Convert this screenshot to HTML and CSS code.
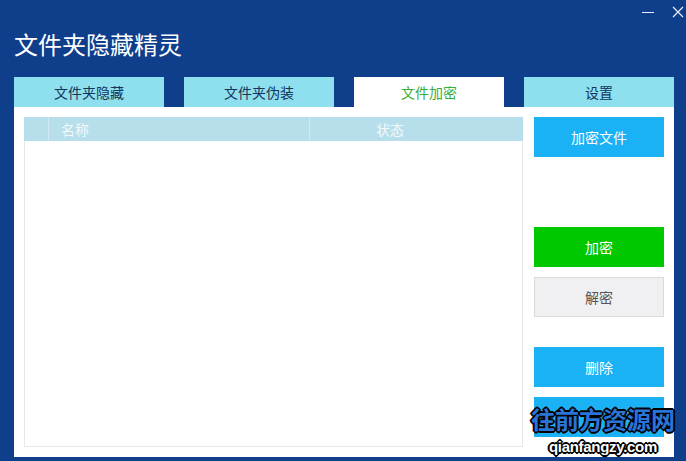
FILE: index.html
```html
<!DOCTYPE html>
<html lang="zh">
<head>
<meta charset="utf-8">
<title>文件夹隐藏精灵</title>
<link rel="stylesheet" href="styles.css">
</head>
<body>
<div class="window">
  <div class="titlebar">
    <div class="controls">
      <span class="ctl min"></span>
      <svg class="ctl close" width="12" height="12" viewBox="0 0 12 12"><path d="M1 1 L11 11 M11 1 L1 11" stroke="#e8f0ff" stroke-width="1.2" fill="none"/></svg>
    </div>
    <h1 class="title">文件夹隐藏精灵</h1>
  </div>
  <div class="tabs">
    <div class="tab">文件夹隐藏</div>
    <div class="tab">文件夹伪装</div>
    <div class="tab active">文件加密</div>
    <div class="tab">设置</div>
  </div>
  <div class="panel">
    <div class="table">
      <div class="thead">
        <div class="th th-check"></div>
        <div class="th th-name">名称</div>
        <div class="th th-status">状态</div>
      </div>
    </div>
    <div class="actions">
      <div class="btn blue">加密文件</div>
      <div class="btn green b-enc">加密</div>
      <div class="btn gray b-dec">解密</div>
      <div class="btn blue b-del">删除</div>
      <div class="btn blue b-last"></div>
    </div>
  </div>
  <div class="watermark">
    <div class="wm-cn">往前方资源网</div>
    <div class="wm-en">qianfangzy.com</div>
  </div>
</div>
</body>
</html>
```
FILE: styles.css
```css
* { box-sizing: border-box; }
html, body { margin: 0; padding: 0; }
body {
  background: #0f3e8b;
  font-family: "Noto Sans CJK SC", "Noto Sans", sans-serif;
  width: 686px;
  height: 461px;
  overflow: hidden;
}
.window {
  position: relative;
  width: 686px;
  height: 461px;
  padding: 0 12px 0 14px;
}
.titlebar {
  height: 77px;
  display: flex;
  flex-direction: column;
}
.controls {
  display: flex;
  justify-content: flex-end;
  align-items: center;
  gap: 18px;
  height: 24px;
  margin-right: -10px;
}
.ctl.min {
  display: block;
  width: 12px;
  height: 1px;
  background: #e8f0ff;
}
.ctl.close { display: block; }
.title {
  margin: 3px 0 0 0;
  font-size: 24px;
  font-weight: normal;
  color: #ffffff;
  line-height: 34px;
}
.tabs {
  display: flex;
  gap: 20px;
  height: 30px;
}
.tab {
  width: 150px;
  height: 30px;
  background: #8fe0ee;
  color: #14345a;
  font-size: 14px;
  line-height: 30px;
  text-align: center;
}
.tab.active {
  background: #ffffff;
  color: #3aae3a;
}
.panel {
  background: #ffffff;
  height: 350px;
  padding: 10px;
  display: flex;
  gap: 11px;
}
.table {
  width: 499px;
  height: 330px;
  border: 1px solid #e6e8ec;
  border-top: none;
}
.thead {
  display: flex;
  height: 24px;
  background: #b7deeb;
  margin: 0 -1px;
}
.th {
  color: #f2f9fc;
  font-size: 14px;
  line-height: 24px;
}
.th-check {
  width: 25px;
  border-right: 1px solid #cfe9f2;
}
.th-name {
  width: 261px;
  padding-left: 12px;
  border-right: 1px solid #cfe9f2;
}
.th-status {
  flex: 1;
  padding-left: 66px;
}
.actions {
  width: 130px;
  display: flex;
  flex-direction: column;
}
.btn {
  height: 40px;
  font-size: 14px;
  line-height: 40px;
  text-align: center;
  color: #ffffff;
}
.btn.blue { background: #1ab1f5; }
.btn.green { background: #00c800; }
.btn.gray {
  background: #f0f0f2;
  color: #555555;
  border: 1px solid #dadada;
  line-height: 38px;
}
.b-enc { margin-top: 70px; }
.b-dec { margin-top: 10px; }
.b-del { margin-top: 30px; }
.b-last { margin-top: 10px; }
.watermark {
  position: absolute;
  left: 528px;
  top: 401px;
  width: 150px;
  text-align: center;
}
.wm-cn {
  font-size: 24px;
  font-weight: bold;
  line-height: 36px;
  color: #2a74d8;
  text-shadow: 1px 1px 0 #000, -1px -1px 0 #000, 1px -1px 0 #000, -1px 1px 0 #000, 2px 0 0 #000, -2px 0 0 #000, 0 2px 0 #000, 0 -2px 0 #000, 0 0 3px #fff;
}
.wm-en {
  font-family: "Liberation Sans", sans-serif;
  font-size: 15px;
  font-weight: bold;
  line-height: 20px;
  color: #ffffff;
  letter-spacing: -0.3px;
  text-shadow: 1px 1px 0 #000, -1px -1px 0 #000, 1px -1px 0 #000, -1px 1px 0 #000, 2px 0 0 #000, -2px 0 0 #000, 0 2px 0 #000, 0 -2px 0 #000;
}
```
